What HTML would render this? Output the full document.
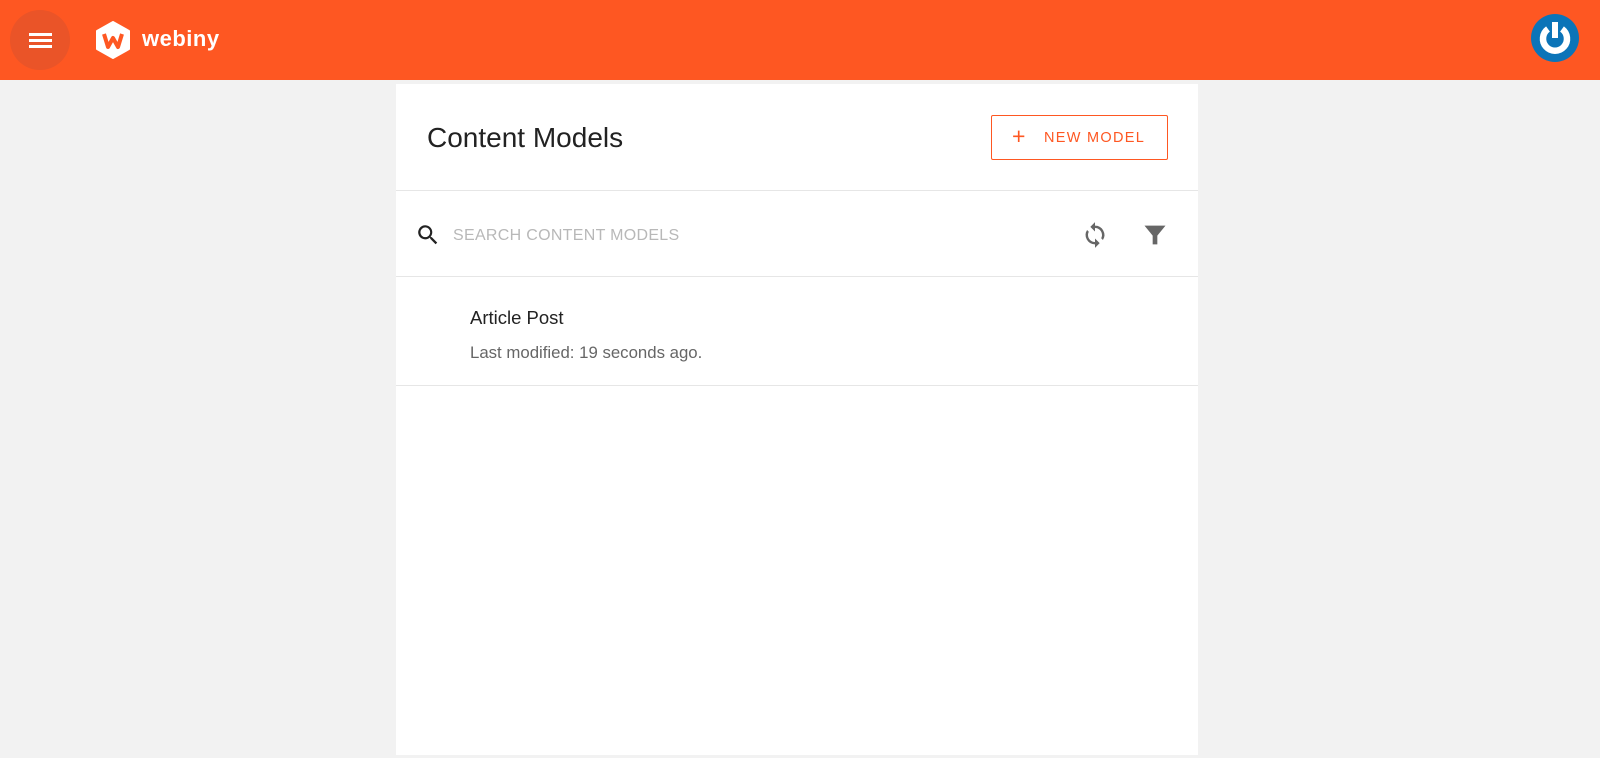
<!DOCTYPE html>
<html><head><style>
*{margin:0;padding:0;box-sizing:border-box}
body{width:1600px;height:758px;background:#f2f2f2;font-family:"Liberation Sans",sans-serif;position:relative;overflow:hidden}
.top{position:absolute;left:0;top:0;width:1600px;height:80px;background:#fe5722}
.ham{position:absolute;left:10px;top:10px;width:60px;height:60px;border-radius:50%;background:#ea5428}
.ham i{position:absolute;left:19px;width:23px;height:2.5px;background:#fff}
.panel{position:absolute;left:396px;top:84px;width:802px;height:671px;background:#fff}
.title{position:absolute;left:31px;top:38px;font-size:28px;color:#222}
.btn{position:absolute;left:595px;top:31px;width:177px;height:45px;border:1px solid #fe5722;border-radius:2px;color:#fe5722;font-size:14.5px;letter-spacing:1.3px;line-height:45px;padding-left:52px}
.btn span{position:absolute;left:20px;top:-2px;font-size:23px;letter-spacing:0}
.hr{position:absolute;left:0;width:802px;height:1px;background:#e6e6e6}
.ph{position:absolute;left:57px;top:143px;font-size:16px;color:#b8b8b8;letter-spacing:.3px}
.it{position:absolute;left:74px;top:223px;font-size:18.5px;color:#222}
.sub{position:absolute;left:74px;top:259px;font-size:16.8px;color:#666}
</style></head><body>
<div class="top">
<div class="ham"><i style="top:23px"></i><i style="top:29px"></i><i style="top:35px"></i></div>
<svg style="position:absolute;left:95px;top:21px" width="36" height="38" viewBox="0 0 36 38"><path d="M18 1L34 10V28L18 37L2 28V10Z" fill="#fff" stroke="#fff" stroke-linejoin="round" stroke-width="2"/><path d="M9 13L13 26L18 17L23 26L27 13" fill="none" stroke="#fe5722" stroke-width="4" stroke-linejoin="round"/></svg>
<div style="position:absolute;left:142px;top:26px;color:#fff;font-size:22px;font-weight:bold;letter-spacing:.5px">webiny</div>
<svg style="position:absolute;left:1531px;top:14px" width="48" height="48" viewBox="0 0 48 48"><circle cx="24" cy="24" r="24" fill="#0b74b8"/><path d="M17 15A12 12 0 1 0 31 15" fill="none" stroke="#fff" stroke-width="6.5"/><rect x="21" y="8" width="6" height="16" fill="#fff"/></svg>
</div>
<div class="panel">
<div class="title">Content Models</div>
<div class="btn"><span>+</span>NEW MODEL</div>
<div class="hr" style="top:106px"></div>
<svg style="position:absolute;left:19px;top:138px" width="26" height="26" viewBox="0 0 24 24"><path fill="#222" d="M15.5 14h-.8l-.3-.3A6.5 6.5 0 1 0 9.5 16a6.5 6.5 0 0 0 4.2-1.6l.3.3v.8l5 5 1.5-1.5-5-5zm-6 0a4.5 4.5 0 1 1 0-9 4.5 4.5 0 0 1 0 9z"/></svg>
<div class="ph">SEARCH CONTENT MODELS</div>
<svg style="position:absolute;left:685px;top:137px" width="28" height="28" viewBox="0 0 24 24"><path fill="#666" d="M12 4V1L8 5l4 4V6c3.3 0 6 2.7 6 6 0 1-.3 2-.7 2.8l1.5 1.5A8 8 0 0 0 12 4zm0 14c-3.3 0-6-2.7-6-6 0-1 .3-2 .7-2.8L5.2 7.7A8 8 0 0 0 12 20v3l4-4-4-4v3z"/></svg>
<svg style="position:absolute;left:745px;top:137px" width="28" height="28" viewBox="0 0 24 24"><path fill="#666" d="M3 4h18l-7 8.5V20h-4v-7.5z"/></svg>
<div class="hr" style="top:192px"></div>
<div class="it">Article Post</div>
<div class="sub">Last modified: 19 seconds ago.</div>
<div class="hr" style="top:301px"></div>
</div>
</body></html>
